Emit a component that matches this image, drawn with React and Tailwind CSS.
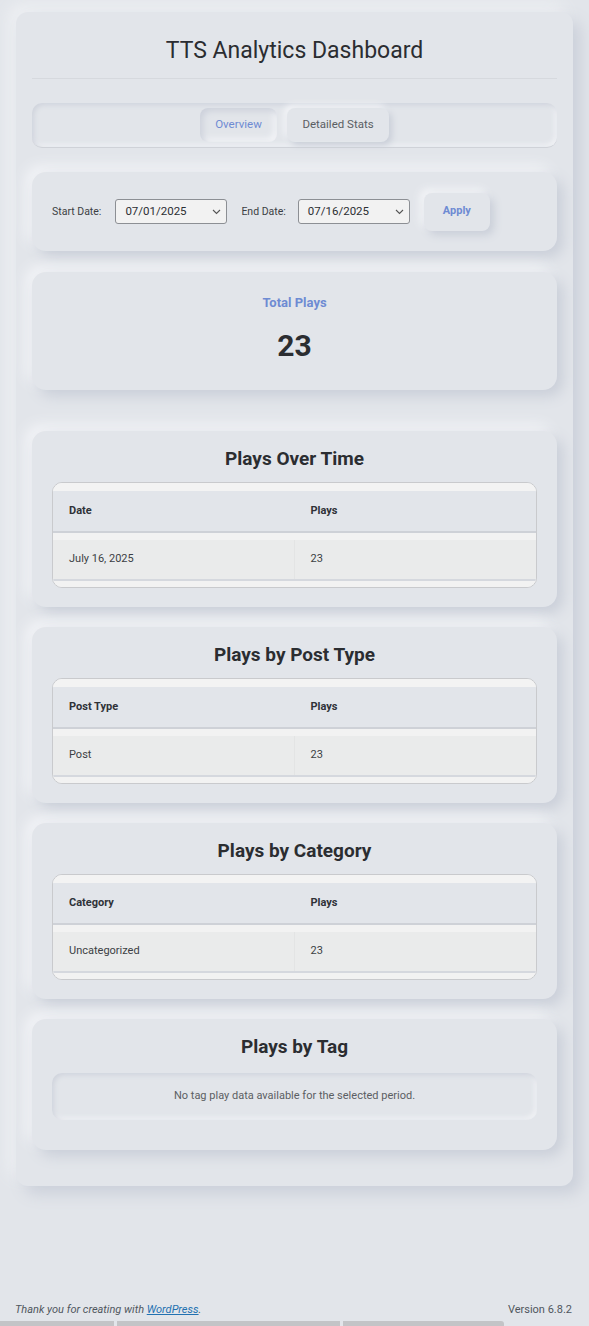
import React, { useState } from 'react';

const font = { fontFamily: 'Roboto, "Liberation Sans", sans-serif' };

const raised = 'bg-[#e2e5ea] rounded-[14px] shadow-[6px_6px_14px_#c9ced8,-6px_-6px_14px_#f4f5f8]';

const DataTable = ({ headers, rows }) => (
  <div className="rounded-[10px] border border-[#c9cacd] overflow-hidden bg-[#f2f3f3]">
    <div className="pt-[8px] bg-[#f3f3f3]">
      <div className="grid grid-cols-2 bg-[#e2e5ea] h-[42px] items-center border-b-2 border-[#ced1d7]">
        {headers.map((h) => (
          <div key={h} className="px-4 text-[11px] font-bold text-[#2f3238]">{h}</div>
        ))}
      </div>
    </div>
    {rows.map((r, i) => (
      <div key={i} className="pt-[7px] pb-[6px] bg-[#f2f2f2]">
        <div className="grid grid-cols-2 bg-[#eaebeb] h-[41px] items-center border-b-2 border-[#d5d8de]">
          {r.map((c, j) => (
            <div key={j} className={'px-4 h-full flex items-center text-[11px] text-[#3c3f44] ' + (j === 0 ? 'border-r border-[#e3e4e4]' : '')}>{c}</div>
          ))}
        </div>
      </div>
    ))}
  </div>
);

const Section = ({ title, children, extra }) => (
  <section className={raised + ' px-5 pt-[17px] ' + (extra || 'pb-[19px]')}>
    <h2 className="text-center text-[19px] font-bold text-[#2b2d31] leading-[22px] mb-[12px]">{title}</h2>
    {children}
  </section>
);

const Chevron = () => (
  <svg className="absolute right-[5px] top-[9px]" width="9" height="6" viewBox="0 0 9 6">
    <path d="M1 1l3.5 3.5L8 1" fill="none" stroke="#555" strokeWidth="1.1" />
  </svg>
);

const DateSelect = ({ value, className }) => (
  <div className={'relative w-[112px] h-[25px] rounded-[3px] border border-[#8c8f94] bg-[#f2f2f2] flex items-center pl-[9px] text-[11.5px] text-[#2c2f33] ' + className}>
    {value}
    <Chevron />
  </div>
);

export default function App() {
  const [tab, setTab] = useState('overview');

  const tabCls = (active) =>
    'h-[34px] rounded-[8px] text-[11.5px] ' +
    (active
      ? 'text-[#6e8bd3] shadow-[inset_3px_3px_6px_#cdd1db,inset_-3px_-3px_6px_#f4f5f8]'
      : 'text-[#5b5e63] shadow-[3px_3px_6px_#c9ced8,-3px_-3px_6px_#f4f5f8]');

  return (
    <div className="min-h-[1326px] bg-[#e2e5ea] flex flex-col" style={font}>
      <div className="px-4 pt-3">
        <div className="bg-[#e2e5ea] rounded-[12px] shadow-[8px_8px_16px_#cbd0da,-8px_-8px_16px_#eef0f3] px-4 pt-[23px] pb-[36px]">
          <h1 className="text-center text-[23px] text-[#2b2d31] leading-[32px] pb-[11px] border-b border-[#d6d9de]">
            TTS Analytics Dashboard
          </h1>

          <div className="mt-6 h-[45px] rounded-[10px] shadow-[inset_2px_2px_5px_#cfd3dc,inset_-2px_-2px_5px_#f3f4f7] border-b border-[#cfd2d8] flex items-center justify-center gap-[10px]">
            <button onClick={() => setTab('overview')} className={tabCls(tab === 'overview') + ' w-[77px]'}>
              Overview
            </button>
            <button onClick={() => setTab('detailed')} className={tabCls(tab === 'detailed') + ' w-[102px]'}>
              Detailed Stats
            </button>
          </div>

          <div className="mt-6 flex flex-col">
            <div className={raised + ' px-5 h-[79px] flex items-center'}>
              <label className="text-[10.5px] text-[#3c3f44]">Start Date:</label>
              <DateSelect value="07/01/2025" className="ml-[14px]" />
              <label className="ml-[14px] text-[10.5px] text-[#3c3f44]">End Date:</label>
              <DateSelect value="07/16/2025" className="ml-[12px]" />
              <button className="ml-[14px] w-[66px] h-[38px] rounded-[8px] text-[11px] font-bold text-[#6e8bd3] bg-[#e2e5ea] shadow-[4px_4px_8px_#c9ced8,-4px_-4px_8px_#f4f5f8]">
                Apply
              </button>
            </div>

            <div className={raised + ' mt-[21px] h-[118px] flex flex-col items-center pt-[23px]'}>
              <div className="text-[13px] font-bold text-[#6e8bd3] leading-[16px]">Total Plays</div>
              <div className="mt-[19px] text-[30px] font-bold text-[#2b2d31] leading-[32px]">23</div>
            </div>

            <div className="mt-[41px] flex flex-col gap-[20px]">
              <Section title="Plays Over Time">
                <DataTable headers={['Date', 'Plays']} rows={[['July 16, 2025', '23']]} />
              </Section>
              <Section title="Plays by Post Type">
                <DataTable headers={['Post Type', 'Plays']} rows={[['Post', '23']]} />
              </Section>
              <Section title="Plays by Category">
                <DataTable headers={['Category', 'Plays']} rows={[['Uncategorized', '23']]} />
              </Section>
              <Section title="Plays by Tag" extra="pb-[30px]">
                <div className="mt-[15px] h-[47px] rounded-[10px] shadow-[inset_2px_2px_5px_#cfd3dc,inset_-2px_-2px_5px_#f3f4f7] flex items-center justify-center text-[11px] text-[#5b5e63]">
                  No tag play data available for the selected period.
                </div>
              </Section>
            </div>
          </div>
        </div>
      </div>

      <div className="flex-1" />

      <footer className="px-[15px] pb-[3px] flex items-center justify-between text-[11px] leading-[16px] text-[#50575e]">
        <span className="italic">
          Thank you for creating with <a href="#" className="text-[#2271b1] underline">WordPress</a>.
        </span>
        <span className="pr-[2px]">Version 6.8.2</span>
      </footer>
      <div className="flex gap-[3px] h-[5px]">
        <div className="w-[114px] bg-[#c3c4c7]" />
        <div className="w-[223px] bg-[#c3c4c7]" />
        <div className="w-[161px] bg-[#c3c4c7] rounded-tr-[3px]" />
      </div>
    </div>
  );
}
